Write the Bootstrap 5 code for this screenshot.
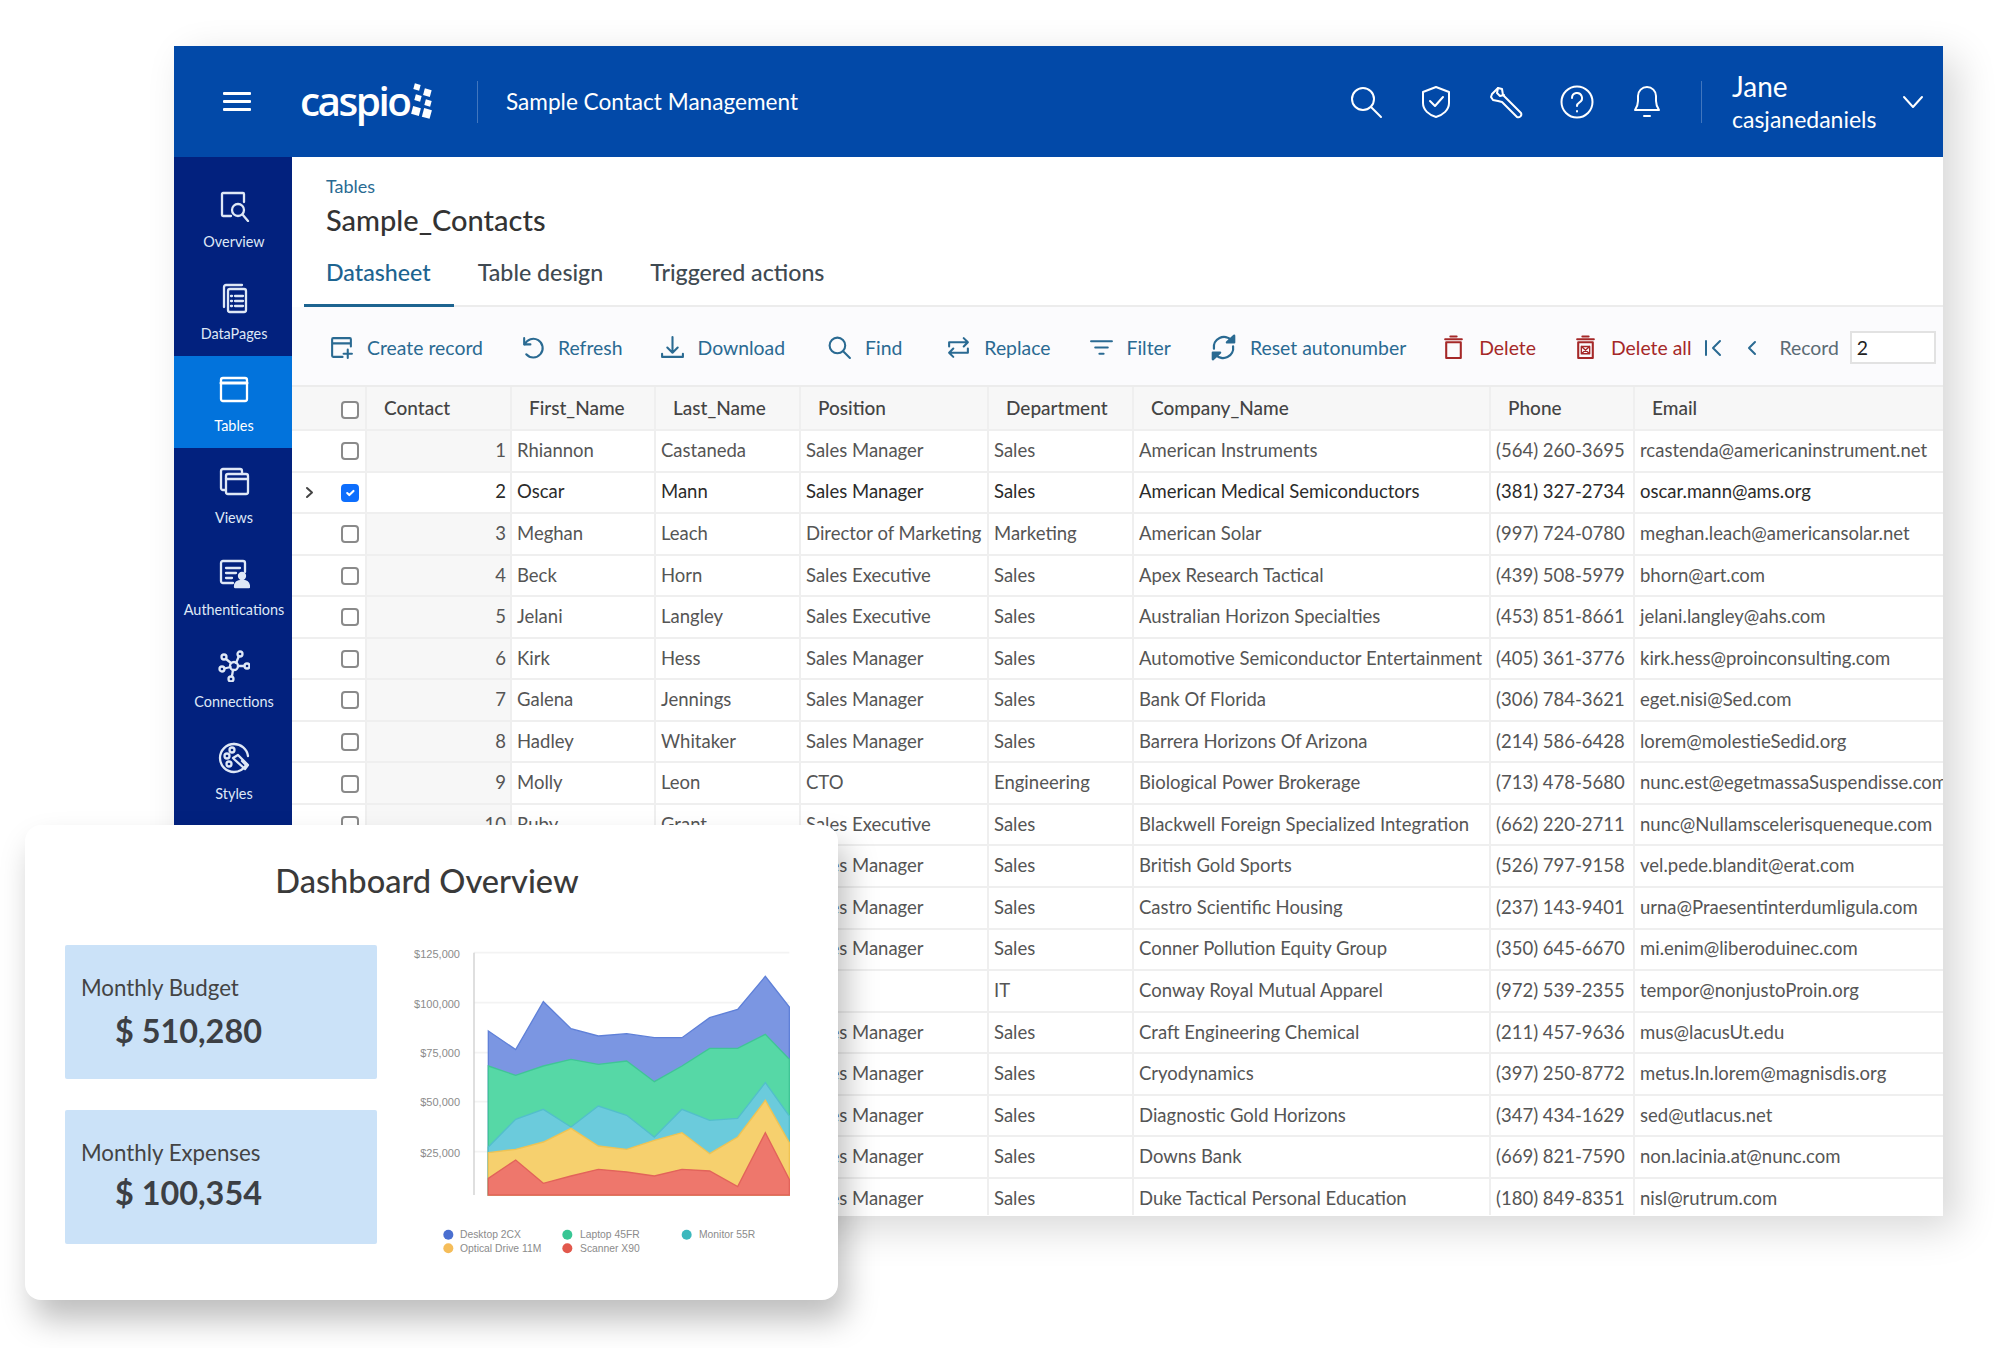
<!DOCTYPE html>
<html lang="en">
<head>
<meta charset="utf-8">
<title>Caspio</title>
<link rel="stylesheet" href="https://cdn.jsdelivr.net/npm/bootstrap@5.3.0/dist/css/bootstrap.min.css">
<style>
html,body{margin:0;background:#fff;height:1348px;overflow:hidden}
body{font-family:Lato,"Liberation Sans",sans-serif;color:#444}
svg{display:block;flex:none}
.ico{fill:none;stroke:currentColor;stroke-width:2;stroke-linecap:round;stroke-linejoin:round}
.stage{position:relative;width:2000px;height:1348px;padding:46px 0 0 174px}
.app{width:1769px;height:1170px;background:#fff;box-shadow:14px 12px 38px rgba(0,0,0,.16);overflow:hidden}
.topbar{height:111px;background:#0249a8;color:#fff;padding-left:49px;padding-right:19px}
.burger{width:28px}
.burger span{display:block;height:3px;background:#fff;margin:5px 0;border-radius:1px}
.logo{margin-left:49px;width:177px}
.logo b{font-family:"Open Sans",sans-serif;font-weight:600;font-size:40.5px;letter-spacing:-2.5px;line-height:1;color:#fff}
.logo svg{margin-left:1px}
.vline{width:1px;height:42px;background:rgba(255,255,255,.25)}
.apptitle{margin-left:28px;font-size:22.6px}
.topicons{gap:36px;margin-right:38px}
.user{margin-left:30px;width:170px}
.user .u1{font-size:28px;line-height:32px}
.user .u2{font-size:23px;line-height:30px;margin-top:2px}
.side{width:118px;flex:none;background:#02217e;padding-top:15px;height:1059px}
.side a{display:block;height:92px;padding:18px 0 0 2px;color:#dfe8f6;text-decoration:none;text-align:center;font-size:14.400px;line-height:18px}
.side a svg{margin:0 auto 11px}
.side a.on{background:#0273dc;color:#fff}
.side .ico{stroke-width:2.300}
.main{width:1651px;min-width:0}
.crumb{padding:18px 0 0 34px;font-size:18px;line-height:22px;color:#2a6a92}
.ttl{margin:5px 0 0 34px;font-size:29px;line-height:36px;font-weight:500;color:#333}
.tabs{margin-left:12px;height:69px;border-bottom:2px solid #ececec;align-items:flex-end;flex-wrap:nowrap}
.tabs .nav-link{padding:0 23px 17px 22px;height:51px;font-size:23.200px;line-height:33px;font-weight:500;color:#3f4a52;border-bottom:3px solid transparent;margin-bottom:-2px}
.tabs .nav-link+.nav-link{padding-left:24px}
.tabs .nav-link.active{color:#1d6490;border-bottom-color:#1d6490}
.tools{height:80px;background:#fbfbfd;border-bottom:2px solid #ececec;padding:3px 0 0 37px;gap:37px;font-size:19.400px;color:#2a6a92}
.tools .t{gap:13px;flex:none}
.tools .t svg{width:25px;height:25px}
.tools .t svg.big{width:27px;height:27px}
.tools .red{color:#a52828}
.ml5{margin-left:5px}
.ml7{margin-left:7px}
.ml1{margin-left:1px}
.ml2{margin-left:2px}
.mn2{margin-left:-2px}
.pager{margin-left:-24px;color:#5b6b75}
.p1{color:#2a6a92;margin-right:25px}
.p2{color:#2a6a92;margin-right:22px}
.p3{margin-right:11px}
.input-rec{width:86px;height:33px;border:2px solid #e2e2e2;border-radius:0;padding:0 5px;font-size:19.400px;color:#222;background:#fff;box-shadow:none}
.sheet{height:828px;overflow:hidden}
.grid{table-layout:fixed;width:1651px;margin:0;border-collapse:collapse;font-size:18.500px;color:#555}
.grid th,.grid td{padding:0 0 0 5px;border:0;border-right:2px solid #efefef;border-bottom:2px solid #efefef;height:41.55px;white-space:nowrap;overflow:hidden;vertical-align:middle;background:#fff;box-shadow:none;color:inherit}
.grid thead th{height:43px;background:#f7f7f7;padding-left:17px;font-size:19px;font-weight:500;color:#444}
.grid th.c0,.grid td.c0{border-right:0;padding:0}
.grid th.c1,.grid td.c1{text-align:center;padding:0}
.grid td.c2{background:#f7f7f7;text-align:right;padding:0 4px 0 0}
.grid thead th.c0{background:#f7f7f7}
.grid tr.sel td{color:#2b2b2b}
.grid tr.sel td.c2{background:#fff}
.grid td:last-child,.grid th:last-child{border-right:0}
.grid .form-check-input{width:18px;height:18px;margin:0;border:2px solid #8a8a8a;border-radius:4px;display:inline-block;vertical-align:middle}
.grid tbody .form-check-input{margin-bottom:2px}
.grid .form-check-input:checked{background-color:#0d6efd;border-color:#0d6efd}
.arrow{color:#444;margin-left:13px}
.card-over{position:absolute;left:25px;top:825px;width:813px;height:475px;border:0;border-radius:16px;background:#fff;box-shadow:8px 20px 32px rgba(0,0,0,.26);padding:0 0 0 40px}
.card-over h2{margin:36px 49px 29px 0;font-size:32.600px;line-height:40px;font-weight:500;text-align:center;color:#3a3a3a}
.boxes{width:312px;margin-top:15px;margin-right:23px;gap:31px}
.box{height:134px;background:#cbe2f8;padding:29px 0 0 16px;border-radius:2px}
.box .l{font-size:22.300px;line-height:28px;color:#444}
.box .v{margin:9px 0 0 34px;font-size:32.400px;line-height:40px;font-weight:700;color:#3c3f44}
.box.b2 .v{margin-top:6px}
.chart{margin-top:1px}
.chart text{font-family:"Liberation Sans",sans-serif;font-size:33px;fill:#8b8b8b}
.chart .lg text{font-size:31px}
</style>
</head>
<body>
<div class="stage">
  <div class="app">
    <header class="topbar d-flex align-items-center">
      <div class="burger"><span></span><span></span><span></span></div>
      <div class="logo d-flex align-items-center">
        <b>caspio</b>
        <svg width="22" height="38" viewBox="0 0 22 38" fill="#fff"><rect x="3" y="1" width="6" height="6" transform="rotate(15 6 4)"/><rect x="13" y="6" width="7" height="7" transform="rotate(15 16 9)"/><rect x="4" y="12" width="6" height="6" transform="rotate(15 7 15)"/><rect x="14" y="17" width="6" height="6" transform="rotate(15 17 20)"/><rect x="1" y="24" width="8" height="8" transform="rotate(15 5 28)"/><rect x="12" y="26" width="8" height="9" transform="rotate(15 16 30)"/></svg>
      </div>
      <div class="vline"></div>
      <div class="apptitle">Sample Contact Management</div>
      <div class="topicons d-flex align-items-center ms-auto">
        <svg class="ico" width="34" height="34" viewBox="0 0 34 34" stroke-width="3.200"><circle cx="14" cy="14" r="11"/><path d="M22 22l10 10"/></svg>
        <svg class="ico" width="34" height="34" viewBox="0 0 34 34" stroke-width="2.800"><path d="M17 2l13 5v11c0 7-6 12-13 14C10 30 4 25 4 18V7z"/><path d="M11 16l5 5 8-9"/></svg>
        <svg class="ico" width="34" height="34" viewBox="0 0 34 34" stroke-width="2.800"><path d="M3 9l6-6 4 1 1 6 3 3 15 15a3 3 0 0 1-4 4L13 17l-4-1-5-1-2-3z"/><path d="M9 3l-1 5 3 3 4-1"/></svg>
        <svg class="ico" width="36" height="36" viewBox="0 0 36 36" stroke-width="2.800"><circle cx="18" cy="18" r="15.500"/><path d="M13 14a5 5 0 1 1 7.500 4.300c-1.600 1-2.500 1.900-2.500 3.700"/><path d="M18 27v.5"/></svg>
        <svg class="ico" width="32" height="34" viewBox="0 0 32 34" stroke-width="2.800"><path d="M4 25c2-3 3-5 3-9V11a9 9 0 0 1 18 0v5c0 4 1 6 3 9z"/><path d="M13 31h6"/></svg>
      </div>
      <div class="vline"></div>
      <div class="user">
        <div class="u1">Jane</div>
        <div class="u2">casjanedaniels</div>
      </div>
      <svg class="ico" width="22" height="14" viewBox="0 0 22 14" stroke-width="3.200"><path d="M2 2l9 10 9-10"/></svg>
    </header>
    <div class="d-flex">
      <nav class="side">
        <a href="#"><svg class="ico" width="32" height="32" viewBox="0 0 32 32"><path d="M4 25V4a1 1 0 0 1 1-1h20a1 1 0 0 1 1 1v8M4 25a1 1 0 0 0 1 1h8"/><circle cx="20" cy="20" r="6"/><path d="M24.500 24.500L30 31"/></svg>Overview</a>
        <a href="#"><svg class="ico" width="32" height="32" viewBox="0 0 32 32"><path d="M6 25V5a2 2 0 0 1 2-2h16"/><rect x="10" y="7" width="18" height="23" rx="2"/><path d="M13 14h1M17 14h8M13 19h1M17 19h8M13 24h1M17 24h8"/></svg>DataPages</a>
        <a href="#" class="on"><svg class="ico" width="32" height="32" viewBox="0 0 32 32"><rect x="3" y="4" width="26" height="23" rx="2"/><path d="M3 9h26" stroke-width="3"/></svg>Tables</a>
        <a href="#"><svg class="ico" width="32" height="32" viewBox="0 0 32 32"><path d="M7 24H5a2 2 0 0 1-2-2V5a2 2 0 0 1 2-2h17a2 2 0 0 1 2 2v3"/><rect x="8" y="8" width="22" height="20" rx="2"/><path d="M8 13h22"/></svg>Views</a>
        <a href="#"><svg class="ico" width="32" height="32" viewBox="0 0 32 32"><path d="M15 25H5a2 2 0 0 1-2-2V5a2 2 0 0 1 2-2h20a2 2 0 0 1 2 2v9"/><path d="M8 10h14M8 15h10M8 20h6"/><circle cx="24" cy="18" r="3" fill="currentColor"/><path d="M17 29c0-4 3-6 7-6s7 2 7 6z" fill="currentColor"/></svg>Authentications</a>
        <a href="#"><svg class="ico" width="32" height="32" viewBox="0 0 32 32"><circle cx="16" cy="16" r="4"/><circle cx="6" cy="7" r="2.500"/><circle cx="22" cy="4" r="2.500"/><circle cx="29" cy="16" r="2.500"/><circle cx="4" cy="19" r="2.500"/><circle cx="13" cy="29" r="2.500"/><path d="M8 9l5 4M21 6l-3 7M26.500 16H20M6.500 18.500l6-1.500M14 26l1-6"/></svg>Connections</a>
        <a href="#"><svg class="ico" width="32" height="32" viewBox="0 0 32 32"><path d="M16 2a14 14 0 1 0 0 28c5 0 10-3 12-7l-4-4"/><path d="M16 2c7 0 13 5 14 12"/><circle cx="9" cy="14" r="2.500"/><circle cx="14" cy="8" r="2.500"/><circle cx="11" cy="22" r="2.500"/><path d="M15 16l5-3 10 10-3 4-10-9z"/></svg>Styles</a>
      </nav>
      <main class="main">
        <div class="crumb">Tables</div>
        <div class="ttl">Sample_Contacts</div>
        <nav class="nav tabs">
          <a class="nav-link active" href="#">Datasheet</a>
          <a class="nav-link" href="#">Table design</a>
          <a class="nav-link" href="#">Triggered actions</a>
        </nav>
        <div class="tools d-flex align-items-center">
          <div class="t d-flex align-items-center"><svg class="ico" viewBox="0 0 24 24"><path d="M21 11V4a1 1 0 0 0-1-1H4a1 1 0 0 0-1 1v16a1 1 0 0 0 1 1h9M3 8h18M18 14v8M14 18h8"/></svg>Create record</div>
          <div class="t d-flex align-items-center"><svg class="ico" viewBox="0 0 24 24"><path d="M4 3v6h6"/><path d="M4.500 9A9 9 0 1 1 6 18.500"/></svg>Refresh</div>
          <div class="t d-flex align-items-center"><svg class="ico" viewBox="0 0 24 24"><path d="M12 2v15M7 12l5 5 5-5M2 18v3h20v-3"/></svg>Download</div>
          <div class="t d-flex align-items-center ml5"><svg class="ico" viewBox="0 0 24 24"><circle cx="10" cy="10" r="7.500"/><path d="M15.500 15.500L22 22"/></svg>Find</div>
          <div class="t d-flex align-items-center ml7"><svg class="ico" viewBox="0 0 24 24"><path d="M3 11V7h17M17 3l4 4-4 4M21 13v4H4M7 13l-4 4 4 4"/></svg>Replace</div>
          <div class="t d-flex align-items-center ml1"><svg class="ico" viewBox="0 0 24 24" stroke-width="2.400"><path d="M2 6h20M6 12h12M10 18h4"/></svg>Filter</div>
          <div class="t d-flex align-items-center ml2"><svg class="ico big" viewBox="0 0 24 24"><path d="M3.500 13a9 9 0 0 1 15.500-7.500"/><path d="M20.500 11a9 9 0 0 1-15.500 7.500"/><path d="M15 7.500h6.500V1.500z" fill="currentColor"/><path d="M9 16.500H2.500v6z" fill="currentColor"/></svg>Reset autonumber</div>
          <div class="t red d-flex align-items-center mn2"><svg class="ico" viewBox="0 0 24 24"><path d="M5 7h14v15H5zM4 4h16M9 1.500h6"/></svg>Delete</div>
          <div class="t red d-flex align-items-center"><svg class="ico" viewBox="0 0 24 24"><path d="M5 7h14v15H5zM4 4h16M9 1.500h6"/><path d="M8 11h8v7H8zM8 11l8 7M16 11l-8 7" stroke-width="1.300"/></svg>Delete all</div>
          <div class="pager d-flex align-items-center">
            <svg class="ico p1" width="18" height="20" viewBox="0 0 18 20" stroke-width="2.400"><path d="M2 3v14M16 3l-7 7 7 7"/></svg>
            <svg class="ico p2" width="10" height="20" viewBox="0 0 10 20" stroke-width="2.400"><path d="M8 4L2 10l6 6"/></svg>
            <div class="p3">Record</div>
            <input class="form-control input-rec" type="text" value="2" aria-label="Record">
          </div>
        </div>
        <div class="sheet">
          <table class="table grid">
            <colgroup><col style="width:42px"><col style="width:32px"><col style="width:145px"><col style="width:144px"><col style="width:145px"><col style="width:188px"><col style="width:145px"><col style="width:357px"><col style="width:144px"><col></colgroup>
            <thead><tr><th class="c0"></th><th class="c1"><input class="form-check-input" type="checkbox" aria-label="All"></th><th>Contact</th><th>First_Name</th><th>Last_Name</th><th>Position</th><th>Department</th><th>Company_Name</th><th>Phone</th><th>Email</th></tr></thead>
            <tbody>
<tr><td class="c0"></td><td class="c1"><input class="form-check-input" type="checkbox" aria-label="1"></td><td class="c2">1</td><td>Rhiannon</td><td>Castaneda</td><td>Sales Manager</td><td>Sales</td><td>American Instruments</td><td>(564) 260-3695</td><td>rcastenda@americaninstrument.net</td></tr>
<tr class="sel"><td class="c0"><svg class="ico arrow" width="9" height="13" viewBox="0 0 9 13" stroke-width="2"><path d="M2 2l5 4.500-5 4.500"/></svg></td><td class="c1"><input class="form-check-input" type="checkbox" checked aria-label="2"></td><td class="c2">2</td><td>Oscar</td><td>Mann</td><td>Sales Manager</td><td>Sales</td><td>American Medical Semiconductors</td><td>(381) 327-2734</td><td>oscar.mann@ams.org</td></tr>
<tr><td class="c0"></td><td class="c1"><input class="form-check-input" type="checkbox" aria-label="3"></td><td class="c2">3</td><td>Meghan</td><td>Leach</td><td>Director of Marketing</td><td>Marketing</td><td>American Solar</td><td>(997) 724-0780</td><td>meghan.leach@americansolar.net</td></tr>
<tr><td class="c0"></td><td class="c1"><input class="form-check-input" type="checkbox" aria-label="4"></td><td class="c2">4</td><td>Beck</td><td>Horn</td><td>Sales Executive</td><td>Sales</td><td>Apex Research Tactical</td><td>(439) 508-5979</td><td>bhorn@art.com</td></tr>
<tr><td class="c0"></td><td class="c1"><input class="form-check-input" type="checkbox" aria-label="5"></td><td class="c2">5</td><td>Jelani</td><td>Langley</td><td>Sales Executive</td><td>Sales</td><td>Australian Horizon Specialties</td><td>(453) 851-8661</td><td>jelani.langley@ahs.com</td></tr>
<tr><td class="c0"></td><td class="c1"><input class="form-check-input" type="checkbox" aria-label="6"></td><td class="c2">6</td><td>Kirk</td><td>Hess</td><td>Sales Manager</td><td>Sales</td><td>Automotive Semiconductor Entertainment</td><td>(405) 361-3776</td><td>kirk.hess@proinconsulting.com</td></tr>
<tr><td class="c0"></td><td class="c1"><input class="form-check-input" type="checkbox" aria-label="7"></td><td class="c2">7</td><td>Galena</td><td>Jennings</td><td>Sales Manager</td><td>Sales</td><td>Bank Of Florida</td><td>(306) 784-3621</td><td>eget.nisi@Sed.com</td></tr>
<tr><td class="c0"></td><td class="c1"><input class="form-check-input" type="checkbox" aria-label="8"></td><td class="c2">8</td><td>Hadley</td><td>Whitaker</td><td>Sales Manager</td><td>Sales</td><td>Barrera Horizons Of Arizona</td><td>(214) 586-6428</td><td>lorem@molestieSedid.org</td></tr>
<tr><td class="c0"></td><td class="c1"><input class="form-check-input" type="checkbox" aria-label="9"></td><td class="c2">9</td><td>Molly</td><td>Leon</td><td>CTO</td><td>Engineering</td><td>Biological Power Brokerage</td><td>(713) 478-5680</td><td>nunc.est@egetmassaSuspendisse.com</td></tr>
<tr><td class="c0"></td><td class="c1"><input class="form-check-input" type="checkbox" aria-label="10"></td><td class="c2">10</td><td>Ruby</td><td>Grant</td><td>Sales Executive</td><td>Sales</td><td>Blackwell Foreign Specialized Integration</td><td>(662) 220-2711</td><td>nunc@Nullamscelerisqueneque.com</td></tr>
<tr><td class="c0"></td><td class="c1"></td><td class="c2"></td><td></td><td></td><td>Sales Manager</td><td>Sales</td><td>British Gold Sports</td><td>(526) 797-9158</td><td>vel.pede.blandit@erat.com</td></tr>
<tr><td class="c0"></td><td class="c1"></td><td class="c2"></td><td></td><td></td><td>Sales Manager</td><td>Sales</td><td>Castro Scientific Housing</td><td>(237) 143-9401</td><td>urna@Praesentinterdumligula.com</td></tr>
<tr><td class="c0"></td><td class="c1"></td><td class="c2"></td><td></td><td></td><td>Sales Manager</td><td>Sales</td><td>Conner Pollution Equity Group</td><td>(350) 645-6670</td><td>mi.enim@liberoduinec.com</td></tr>
<tr><td class="c0"></td><td class="c1"></td><td class="c2"></td><td></td><td></td><td></td><td>IT</td><td>Conway Royal Mutual Apparel</td><td>(972) 539-2355</td><td>tempor@nonjustoProin.org</td></tr>
<tr><td class="c0"></td><td class="c1"></td><td class="c2"></td><td></td><td></td><td>Sales Manager</td><td>Sales</td><td>Craft Engineering Chemical</td><td>(211) 457-9636</td><td>mus@lacusUt.edu</td></tr>
<tr><td class="c0"></td><td class="c1"></td><td class="c2"></td><td></td><td></td><td>Sales Manager</td><td>Sales</td><td>Cryodynamics</td><td>(397) 250-8772</td><td>metus.In.lorem@magnisdis.org</td></tr>
<tr><td class="c0"></td><td class="c1"></td><td class="c2"></td><td></td><td></td><td>Sales Manager</td><td>Sales</td><td>Diagnostic Gold Horizons</td><td>(347) 434-1629</td><td>sed@utlacus.net</td></tr>
<tr><td class="c0"></td><td class="c1"></td><td class="c2"></td><td></td><td></td><td>Sales Manager</td><td>Sales</td><td>Downs Bank</td><td>(669) 821-7590</td><td>non.lacinia.at@nunc.com</td></tr>
<tr><td class="c0"></td><td class="c1"></td><td class="c2"></td><td></td><td></td><td>Sales Manager</td><td>Sales</td><td>Duke Tactical Personal Education</td><td>(180) 849-8351</td><td>nisl@rutrum.com</td></tr>
            </tbody>
          </table>
        </div>
      </main>
    </div>
  </div>
  <section class="card card-over">
    <h2>Dashboard Overview</h2>
    <div class="d-flex">
      <div class="boxes d-flex flex-column">
        <div class="box"><div class="l">Monthly Budget</div><div class="v">$ 510,280</div></div>
        <div class="box b2"><div class="l">Monthly Expenses</div><div class="v">$ 100,354</div></div>
      </div>
      <svg class="chart" width="420" height="340" viewBox="0 0 1260 1020">
        <path d="M222 65H1168M222 215H1168M222 365H1168M222 512H1168M222 662H1168" stroke="#f3f3f3" stroke-width="5" fill="none"/>
        <path d="M222 65V792" stroke="#cfcfcf" stroke-width="4" fill="none"/>
        <g text-anchor="end"><text x="180" y="82">$125,000</text><text x="180" y="230">$100,000</text><text x="180" y="378">$75,000</text><text x="180" y="526">$50,000</text><text x="180" y="677">$25,000</text></g>
        <polygon points="265,300 347,356 430,212 513,293 595,315 680,308 763,320 846,320 929,260 1013,235 1096,136 1168,228 1168,792 265,792" fill="#7b96e2" stroke="#5f80d8" stroke-width="4"/>
        <polygon points="265,405 347,433 430,405 513,385 595,400 680,390 763,452 846,405 929,352 1013,352 1096,310 1168,385 1168,792 265,792" fill="#56d8a6" stroke="#40c596" stroke-width="4"/>
        <polygon points="265,648 347,565 430,535 513,588 595,525 680,553 763,618 846,535 929,568 1013,562 1096,455 1168,555 1168,792 265,792" fill="#6bcbdc" stroke="#52bfca" stroke-width="4"/>
        <polygon points="265,665 347,655 430,633 513,592 595,645 680,655 763,628 846,605 929,668 1013,618 1096,508 1168,635 1168,792 265,792" fill="#f6d06e" stroke="#efc353" stroke-width="4"/>
        <polygon points="265,742 347,687 430,757 513,735 595,715 680,723 763,735 846,715 929,720 1013,767 1096,605 1168,745 1168,792 265,792" fill="#ee776c" stroke="#e2635a" stroke-width="4"/>
        <g class="lg">
        <circle cx="145" cy="911" r="15" fill="#4a6fd0"/><text x="180" y="922">Desktop 2CX</text>
        <circle cx="502" cy="911" r="15" fill="#38c694"/><text x="540" y="922">Laptop 45FR</text>
        <circle cx="860" cy="911" r="15" fill="#3cb8bd"/><text x="897" y="922">Monitor 55R</text>
        <circle cx="145" cy="952" r="15" fill="#f5bd5a"/><text x="180" y="963">Optical Drive 11M</text>
        <circle cx="502" cy="952" r="15" fill="#e2584c"/><text x="540" y="963">Scanner X90</text>
        </g>
      </svg>
    </div>
  </section>
</div>
<script src="https://cdn.jsdelivr.net/npm/bootstrap@5.3.0/dist/js/bootstrap.bundle.min.js"></script>
</body>
</html>
